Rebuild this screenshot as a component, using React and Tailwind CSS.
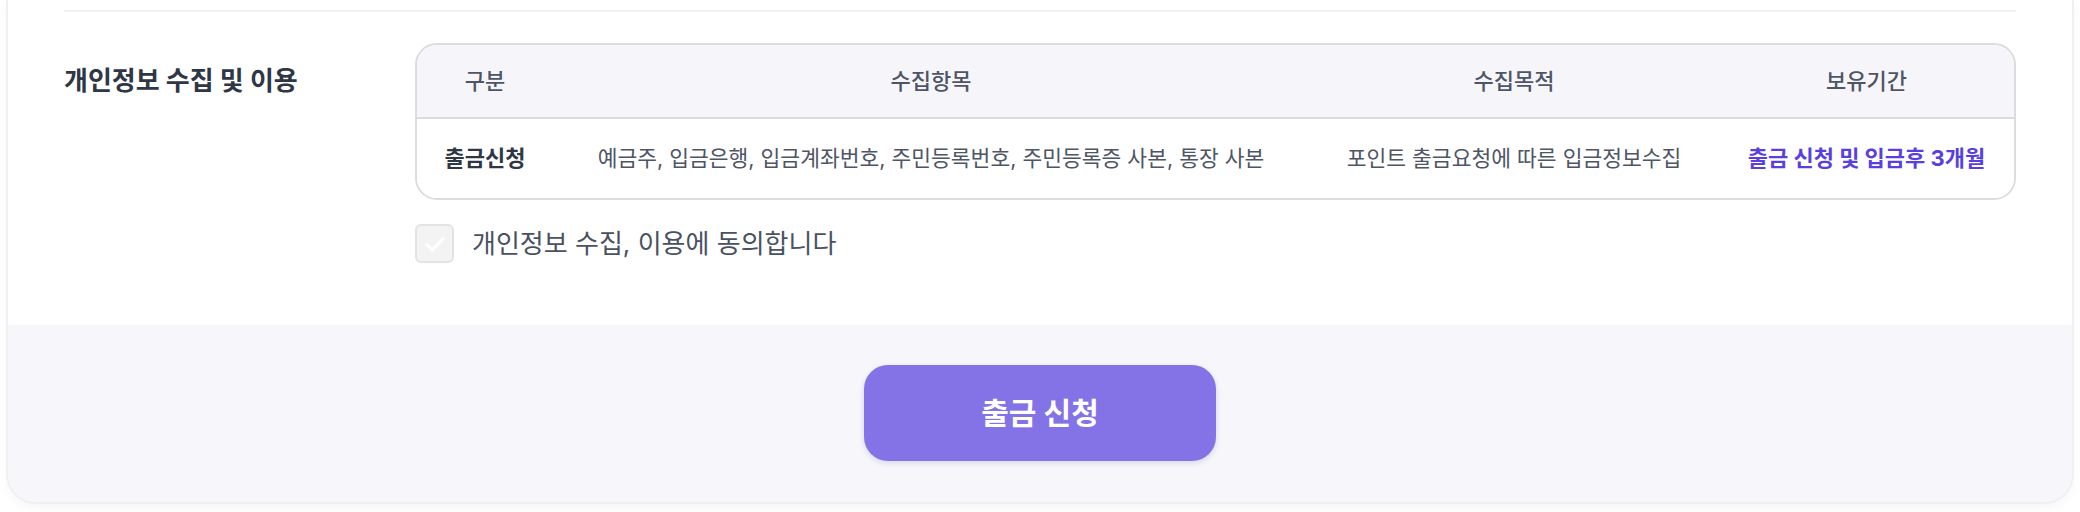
const rows = [
  {
    type: "출금신청",
    items: "예금주, 입금은행, 입금계좌번호, 주민등록번호, 주민등록증 사본, 통장 사본",
    purpose: "포인트 출금요청에 따른 입금정보수집",
    period: "출금 신청 및 입금후 3개월",
  },
];

const CheckIcon = () => (
  <svg width="26" height="26" viewBox="0 0 24 24" fill="none">
    <path
      d="M4.5 12.5l5 5L19.5 7"
      stroke="#ffffff"
      strokeWidth="2.8"
      strokeLinecap="round"
      strokeLinejoin="round"
    />
  </svg>
);

const App = () => {
  return (
    <div
      className="min-h-[512px] bg-white px-[6px]"
      style={{ fontFamily: 'Inter, "Noto Sans CJK KR", sans-serif' }}
    >
      <div className="overflow-hidden rounded-b-[30px] border-x-2 border-b-2 border-[#f0f0f2] bg-white shadow-[0_4px_10px_rgba(0,0,0,0.04)]">
        {/* Privacy section */}
        <div className="px-[56px] pt-[10px] pb-[62px]">
          <div className="border-t-2 border-[#f2f2f4]" />

          <div className="mt-[31px] flex">
            <div className="flex h-[75px] w-[351px] shrink-0 items-center">
              <h3 className="text-[26px] font-bold text-[#2f3747]">
                개인정보 수집 및 이용
              </h3>
            </div>

            <div className="flex-1">
              <div className="overflow-hidden rounded-[22px] border-2 border-[#dcdce0]">
                <div className="grid h-[74px] grid-cols-[136px_756px_410px_1fr] items-center border-b-2 border-[#dcdce0] bg-[#f6f6fa] text-center text-[22px] font-medium text-[#4e5565]">
                  <div>구분</div>
                  <div>수집항목</div>
                  <div>수집목적</div>
                  <div>보유기간</div>
                </div>
                {rows.map((row) => (
                  <div
                    key={row.type}
                    className="grid h-[79px] grid-cols-[136px_756px_410px_1fr] items-center bg-white text-center text-[21.5px]"
                  >
                    <div className="text-[22px] font-bold text-[#2f3747]">{row.type}</div>
                    <div className="text-[#4e5565]">{row.items}</div>
                    <div className="text-[#4e5565]">{row.purpose}</div>
                    <div className="text-[22px] font-bold text-[#5a3fe0]">{row.period}</div>
                  </div>
                ))}
              </div>

              <label className="mt-[24px] flex items-center gap-[18px]">
                <span className="flex h-[39px] w-[39px] items-center justify-center rounded-[6px] border-2 border-[#e3e3e6] bg-[#f3f3f4]">
                  <CheckIcon />
                </span>
                <span className="text-[26px] text-[#4a5262]">
                  개인정보 수집, 이용에 동의합니다
                </span>
              </label>
            </div>
          </div>
        </div>

        {/* Submit */}
        <div className="flex justify-center bg-[#f7f7fb] pt-[40px] pb-[41px]">
          <button className="h-[96px] w-[352px] rounded-[24px] bg-[#8473e6] text-[30px] font-bold text-white shadow-[0_2px_6px_rgba(80,60,160,0.18)]">
            출금 신청
          </button>
        </div>
      </div>
    </div>
  );
};

export default App;
